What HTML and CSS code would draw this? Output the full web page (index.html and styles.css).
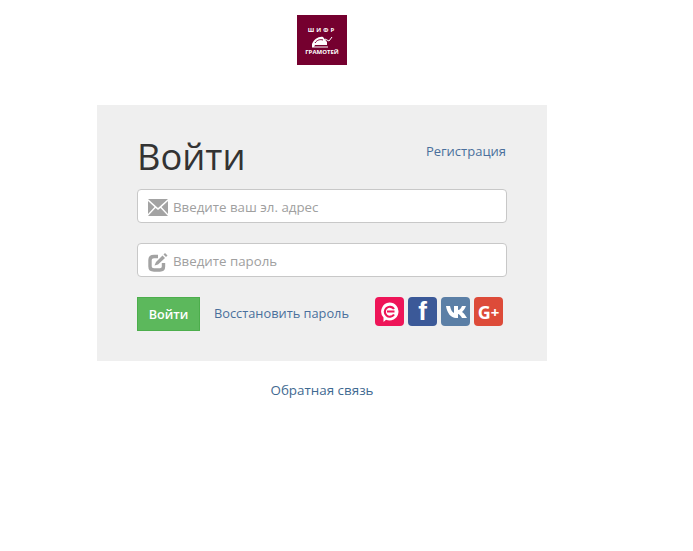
FILE: index.html
```html
<!DOCTYPE html>
<html lang="ru">
<head>
    <meta charset="UTF-8">
    <meta name="viewport" content="width=device-width, initial-scale=1.0">
    <title>Войти</title>
    <link rel="stylesheet" href="styles.css">
</head>
<body>
    <div class="page">
        <div class="logo">
            <span class="logo-top">ШИФР</span>
            <svg class="logo-icon" width="23" height="13" viewBox="0 0 23 13">
                <path d="M1 12 L1 9 C3 4 8 1 12 2 L16 7 L16 10 L4 10 L3 12 Z" fill="#fff"/>
                <path d="M4 8 C6 5 9 4 12 5" stroke="#7a0032" stroke-width="1" fill="none"/>
                <path d="M14 4 L18 6 L21 2" stroke="#fff" stroke-width="1" fill="none"/>
                <path d="M1 12 L17 12" stroke="#fff" stroke-width="1"/>
            </svg>
            <span class="logo-bottom">ГРАМОТЕЙ</span>
        </div>

        <div class="login-panel">
            <div class="login-head">
                <h1>Войти</h1>
                <a href="#" class="link">Регистрация</a>
            </div>
            <form>
                <div class="form-group">
                    <svg class="field-icon" width="20" height="17" viewBox="0 0 20 17">
                        <path d="M0 0 H20 L10 9 Z" fill="#a3a3a3"/>
                        <path d="M0 2 L6.5 8 L0 15 Z M20 2 L13.5 8 L20 15 Z" fill="#a3a3a3"/>
                        <path d="M0 17 L7.5 9 L10 11 L12.5 9 L20 17 Z" fill="#a3a3a3"/>
                    </svg>
                    <input type="text" placeholder="Введите ваш эл. адрес">
                </div>
                <div class="form-group">
                    <svg class="field-icon" width="20" height="19" viewBox="0 0 20 19">
                        <path d="M10 3.500 H6 Q2 3.500 2 7 V13.500 Q2 17 6 17 H12 Q15.500 17 15.500 13.500 V10" stroke="#a3a3a3" stroke-width="3.400" fill="none"/>
                        <path d="M6.500 12.500 L8 9 L14.500 2.500 L17 5 L10 11.500 Z" fill="#a3a3a3"/>
                        <path d="M15.500 1.500 L17 0 L19.500 2.500 L18 4 Z" fill="#a3a3a3"/>
                    </svg>
                    <input type="password" placeholder="Введите пароль">
                </div>
                <div class="actions">
                    <button type="submit">Войти</button>
                    <a href="#" class="link restore">Восстановить пароль</a>
                    <div class="socials">
                        <a href="#" class="social social-chat">
                            <svg width="23" height="23" viewBox="0 0 23 23">
                                <path d="M11.500 2.500 A9 9 0 1 1 8 19.800 L5.500 22 L5.500 17.500 A9 9 0 0 1 11.500 2.500 Z" fill="#fff"/>
                                <path d="M16 9 A5 5 0 1 0 16 14.500 M9 11.500 H16.500" stroke="#ee1558" stroke-width="2.200" fill="none"/>
                            </svg>
                        </a>
                        <a href="#" class="social social-fb">f</a>
                        <a href="#" class="social social-vk">
                            <svg width="22" height="14" viewBox="0 0 22 14">
                                <path d="M1 1 H5 C6 5 7 7 9 8 V1 H13 V5 C15 5 16 3 17 1 H21 C20 4 18 6 17 7 C19 8 20 10 22 13 H17 C16 11 14 9 13 9 V13 H11 C6 13 2 8 1 1 Z" fill="#fff"/>
                            </svg>
                        </a>
                        <a href="#" class="social social-gp">G<span class="plus">+</span></a>
                    </div>
                </div>
            </form>
        </div>

        <div class="feedback">
            <a href="#" class="link">Обратная связь</a>
        </div>
    </div>
</body>
</html>
```

FILE: styles.css
```css
body {
    font-family: "Open Sans", Arial, sans-serif;
    margin: 0;
    color: #333;
    background-color: #fff;
}
.page {
    width: 450px;
    margin-left: 97px;
    padding-top: 15px;
}
.logo {
    width: 50px;
    height: 50px;
    margin: 0 auto 40px;
    background-color: #75002f;
    color: #fff;
    font-weight: bold;
    display: flex;
    flex-direction: column;
    align-items: center;
    padding-top: 11px;
    box-sizing: border-box;
}
.logo-top {
    font-size: 6px;
    line-height: 8px;
    letter-spacing: 2px;
}
.logo-icon {
    margin-top: 1px;
}
.logo-bottom {
    font-size: 6px;
    line-height: 9px;
}
.login-panel {
    background-color: #efefef;
    height: 256px;
    padding: 28px 40px 0;
    box-sizing: border-box;
}
.login-head {
    display: flex;
    justify-content: space-between;
    height: 56px;
}
h1 {
    font-size: 36.3px;
    font-weight: normal;
    line-height: 46px;
    margin: 0;
    color: #333;
}
.link {
    color: #4a6f9c;
    text-decoration: none;
    font-size: 12.8px;
}
.login-head .link {
    margin-top: 9px;
    margin-right: 1px;
    font-size: 13px;
}
.form-group {
    position: relative;
    margin-bottom: 20px;
}
.field-icon {
    position: absolute;
    left: 11px;
    top: 10px;
}
input {
    display: block;
    width: 100%;
    height: 34px;
    padding: 2px 10px 0 35px;
    border: 1px solid #c8c8c8;
    border-radius: 4px;
    box-sizing: border-box;
    font-family: inherit;
    font-size: 13.3px;
    background-color: #fff;
}
input::placeholder {
    color: #a0a0a0;
    opacity: 1;
}
.actions {
    display: flex;
    align-items: flex-start;
    height: 34px;
}
button {
    width: 63px;
    height: 34px;
    background-color: #5cb85c;
    color: #fff;
    border: 1px solid #4cae4c;
    font-family: inherit;
    font-size: 12.6px;
    font-weight: 600;
    padding: 0;
    cursor: pointer;
}
.restore {
    margin-left: 14px;
    line-height: 33px;
}
.socials {
    display: flex;
    gap: 4px;
    margin-left: auto;
    margin-right: 4px;
}
.social {
    width: 29px;
    height: 29px;
    border-radius: 4px;
    display: flex;
    align-items: center;
    justify-content: center;
    color: #fff;
    text-decoration: none;
    font-weight: bold;
}
.social-chat {
    background-color: #ee1558;
}
.social-fb {
    background-color: #3b5998;
    font-family: "Liberation Sans", Arial, sans-serif;
    font-size: 26px;
}
.social-vk {
    background-color: #5b7fa6;
}
.social-gp {
    background-color: #dd4b39;
    font-size: 18px;
}
.plus {
    font-size: 15px;
}
.feedback {
    text-align: center;
    margin-top: 17px;
}
.feedback .link {
    color: #3f6a91;
    font-size: 13.4px;
}
```
